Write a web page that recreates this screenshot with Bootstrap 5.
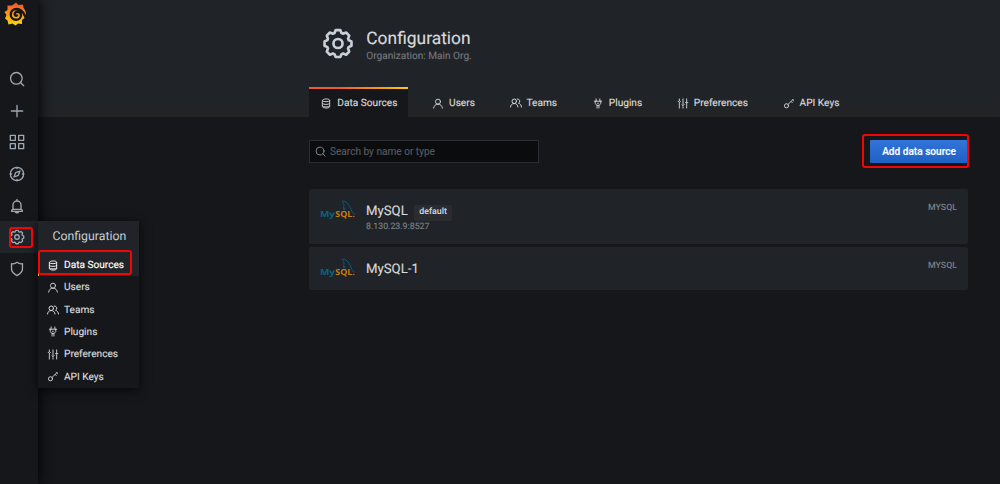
<!DOCTYPE html>
<html lang="en" data-bs-theme="dark">
<head>
<meta charset="utf-8">
<meta name="viewport" content="width=device-width, initial-scale=1">
<title>Configuration: Data Sources</title>
<link href="https://cdn.jsdelivr.net/npm/bootstrap@5.3.0/dist/css/bootstrap.min.css" rel="stylesheet">
<style>
body{background:#15171a;font-family:Roboto,sans-serif;color:#d8d9da;font-size:10.15px;line-height:1.5;height:484px;overflow:hidden;text-rendering:geometricPrecision}
svg.ico{fill:none;stroke:currentColor;stroke-width:2;stroke-linecap:round;stroke-linejoin:round;display:block;flex:none}
.side{width:38px;z-index:5;background:#15171a;box-shadow:0 0 14px 1px #000;flex:none}
.side-logo{height:63px;padding:2px 0 0 4px}
.side-item{height:31.7px;width:38px;padding-left:9px;color:#9fa7b3}
.side-item.open{background:#202327;color:#9fa7b3}
.flyout{left:38px;top:0;width:101px;height:167px;background:#15171a;box-shadow:0 2px 10px rgba(0,0,0,.75);color:#d8d9da}
.flyout-title{height:32.5px;background:#202327;font-size:12.3px;padding-left:14.5px;color:#c7d0d9}
.flyout-item{height:22.3px;padding-left:9px;gap:5px;-webkit-text-stroke:.15px}
.flyout-item span,.tab-item span{padding-top:1.4px}
.flyout-item.current{background:#202327;color:#fff;border-left:1px solid #f5b30b;padding-left:8px}
.top{background:linear-gradient(#202328 0,#202328 92px,#222325 117px);height:117px}
.inner{width:659px;margin-left:271px}
.ttl{font-size:17.4px;line-height:22px;color:#d8d9da;-webkit-text-stroke:.15px;padding-top:.6px}
.sub{font-size:10.1px;line-height:14px;color:#72767c;-webkit-text-stroke:.15px}
.tabs-row{gap:12.700px;height:30px}
.tab-item{padding:0 10.7px 0 11.3px;gap:5px;color:#d8d9da;border-top:2px solid transparent;-webkit-text-stroke:.15px}
.tab-item.current{background:#15171a;border-image:linear-gradient(90deg,#f05a28 30%,#fbca0a) 1}
.find{width:230px;height:23px;background:#0b0c0e;border:1px solid #2b2d31;padding-left:5px;gap:4px;color:#8b8f96}
.find input{font-size:10.1px;color:#c7d0d9;-webkit-text-stroke:.15px}
.find input::placeholder{color:#545860;opacity:1}
.add{width:98px;height:23px;background:linear-gradient(#3274d9,#1f60c4);color:#fff;font-size:10.1px;font-weight:500;border-radius:1px;border:0;-webkit-text-stroke:.15px}
.source{background:#202327;border-radius:2px;padding:0 11px}
.source-name{font-size:13.2px;line-height:18px;color:#d8d9da;-webkit-text-stroke:.15px}
.tag{background:#2b2c2f;border-radius:2px;height:16px;padding:0 5.500px;font-size:8.8px;font-weight:500;color:#d8dfe8}
.url{font-size:8.8px;line-height:12px;color:#7b8087;-webkit-text-stroke:.15px}
.kind{font-size:8.8px;color:#7b8087;font-weight:500}
.mark-box{border:2px solid #f20505;border-radius:3px;z-index:9;pointer-events:none}
</style>
</head>
<body>
<svg width="0" height="0" class="position-absolute">
<defs>
<symbol id="i-search" viewBox="0 0 24 24"><circle cx="11" cy="11" r="8.7"/><path d="M17.2 17.2 22 22"/></symbol>
<symbol id="i-plus" viewBox="0 0 24 24"><path d="M12 3.5v17M3.5 12h17"/></symbol>
<symbol id="i-apps" viewBox="0 0 24 24"><path d="M2 2H9.500V9.500H2ZM14.500 2H22V9.500H14.500ZM2 14.500H9.500V22H2ZM14.500 14.500H22V22H14.500Z"/></symbol>
<symbol id="i-compass" viewBox="0 0 24 24"><circle cx="12" cy="12" r="10"/><path d="M16.500 7.500 14 14l-6.500 2.500L10 10ZM12 2v2M12 20v2M2 12h2M20 12h2"/></symbol>
<symbol id="i-bell" viewBox="0 0 24 24"><path d="M12 2v2.500M6 17v-6.500a6 6 0 0 1 12 0V17M4 20v-1.500L6 17h12l2 1.500V20ZM9.500 20.500a2.700 2.700 0 0 0 5 0"/></symbol>
<symbol id="i-cog" viewBox="0 0 24 24"><path d="M9.300 4.200 10.300 2h3.400l1 2.200 1.100.450 2.300-.850 2.300 2.300-.850 2.300.450 1.100 2.100 1v3.200l-2.100 1-.450 1.100.850 2.300-2.300 2.300-2.300-.850-1.100.450-1 2.100h-3.400l-1-2.100-1.100-.450-2.300.850-2.300-2.300.850-2.300-.450-1.100-2.100-1v-3.200l2.100-1 .450-1.100-.850-2.300 2.300-2.300 2.300.850Z"/><circle cx="12" cy="12" r="3.400"/></symbol>
<symbol id="i-shield" viewBox="0 0 24 24"><path d="M12 2C9.500 4 6.500 4.600 3.800 4v8c0 4.500 3 7 8.200 10 5.200-3 8.200-5.500 8.200-10V4C17.500 4.600 14.500 4 12 2Z"/></symbol>
<symbol id="i-db" viewBox="0 0 24 24"><path d="M4 5c0-4 16-4 16 0v14c0 4-16 4-16 0ZM4 6c2 3 14 3 16 0M4 12c2 3 14 3 16 0M4 17.500c2 3 14 3 16 0"/></symbol>
<symbol id="i-user" viewBox="0 0 24 24"><circle cx="12" cy="8" r="5.500"/><path d="M2.500 22c.5-5 4-8.500 9.500-8.500s9 3.500 9.500 8.500"/></symbol>
<symbol id="i-users" viewBox="0 0 24 24"><circle cx="8.500" cy="8.500" r="4.500"/><path d="M1 20c.5-4 3-7 7.500-7s7 3 7.500 7M14.500 4a4.500 4.500 0 0 1 2.500 8.500c3.500 1 5.500 3.500 6 7.500"/></symbol>
<symbol id="i-plug" viewBox="0 0 24 24"><path d="M4 7h16M8 2v5M16 2v5M6 7v5l3.500 4h5L18 12V7M10 16v6M14 16v6M11 11.500h2"/></symbol>
<symbol id="i-sliders" viewBox="0 0 24 24"><path d="M4 2v3M4 9v13M1.500 8 4 5.500 6.500 8M12 2v12M12 19v3M9.500 14.500 12 17l2.500-2.500M20 2v6M20 12v10M17.500 10h5"/></symbol>
<symbol id="i-key" viewBox="0 0 24 24"><circle cx="6.500" cy="17" r="4.500"/><path d="m10 14 6-6 5-5M16.500 7.500l2.500 2.500M20 4l2 2"/></symbol>
<symbol id="i-mysql" viewBox="0 0 36 22"><g fill="none" stroke="#0b5f83" stroke-width=".9" stroke-linecap="round" stroke-linejoin="round"><path d="M22.500 1.200c1.800-.5 3.200.3 4.500 1.800 2.600 2.800 4 5.400 4.600 8 .4 1.500 1.500 2.100 2.900 3M22.500 1.200c.3 1.300 1 2 1.300 3 .6 2.200-.5 3.300-.2 4.800.4 1.800 1.300 1.300 1.300-.7"/></g><text x="0" y="17" font-family="Open Sans, sans-serif" font-weight="700" font-size="8.300" fill="#0b6088" textLength="15" lengthAdjust="spacingAndGlyphs">My</text><text x="15.300" y="17" font-family="Open Sans, sans-serif" font-weight="700" font-size="8.300" fill="#c87c16" textLength="19.500" lengthAdjust="spacingAndGlyphs">SQL.</text></symbol>
</defs>
</svg>

<div class="d-flex vh-100">
  <nav class="side position-relative d-flex flex-column">
    <div class="side-logo">
      <svg width="23" height="24" viewBox="0 0 46 48" aria-label="Grafana">
        <defs><linearGradient id="sun" x1="0" y1="1" x2="0" y2="0"><stop offset="0" stop-color="#fcdb0a"/><stop offset=".5" stop-color="#f89a1c"/><stop offset="1" stop-color="#f04e2a"/></linearGradient></defs>
        <path fill="url(#sun)" d="M24 1l5 5 9-1 1 7c3 3 5 8 5 13l-5 1 2 6-5 4 0 8-8-1-5 4-6-4-8 2-2-8-5-4 3-7-4-6 6-4 0-9 9 0Z"/>
        <path fill="none" stroke="#15171a" stroke-width="4.600" stroke-linecap="round" d="M42 28C39 21 34 14 25 14c-7 0-11.500 5-11.500 11S18 35.500 24 35.500s10-4 10-9-4-7-7.500-7-5.500 3-5 5.500 2.500 3 4.500 2"/>
      </svg>
    </div>
    <div class="side-item d-flex align-items-center"><svg class="ico" width="16" height="16"><use href="#i-search"/></svg></div>
    <div class="side-item d-flex align-items-center"><svg class="ico" width="16" height="16"><use href="#i-plus"/></svg></div>
    <div class="side-item d-flex align-items-center"><svg class="ico" width="16" height="16"><use href="#i-apps"/></svg></div>
    <div class="side-item d-flex align-items-center"><svg class="ico" width="16" height="16"><use href="#i-compass"/></svg></div>
    <div class="side-item d-flex align-items-center"><svg class="ico" width="16" height="16"><use href="#i-bell"/></svg></div>
    <div class="side-item open position-relative d-flex align-items-center"><svg class="ico" width="16" height="16"><use href="#i-cog"/></svg>
      <div class="flyout position-absolute">
        <div class="flyout-title d-flex align-items-center">Configuration</div>
        <div class="flyout-item current d-flex align-items-center"><svg class="ico" width="12" height="11"><use href="#i-db"/></svg><span>Data Sources</span></div>
        <div class="flyout-item d-flex align-items-center"><svg class="ico" width="12" height="11"><use href="#i-user"/></svg><span>Users</span></div>
        <div class="flyout-item d-flex align-items-center"><svg class="ico" width="12" height="12"><use href="#i-users"/></svg><span>Teams</span></div>
        <div class="flyout-item d-flex align-items-center"><svg class="ico" width="12" height="11"><use href="#i-plug"/></svg><span>Plugins</span></div>
        <div class="flyout-item d-flex align-items-center"><svg class="ico" width="12" height="11"><use href="#i-sliders"/></svg><span>Preferences</span></div>
        <div class="flyout-item d-flex align-items-center"><svg class="ico" width="12" height="11"><use href="#i-key"/></svg><span>API Keys</span></div>
        <div class="mark-box position-absolute" style="left:0;top:29px;width:94px;height:25px"></div>
      </div>
      <div class="mark-box position-absolute" style="left:9px;top:6px;width:24px;height:21px"></div>
    </div>
    <div class="side-item d-flex align-items-center"><svg class="ico" width="16" height="16"><use href="#i-shield"/></svg></div>
  </nav>

  <main class="flex-grow-1">
    <header class="top">
      <div class="inner d-flex flex-column h-100">
        <div class="d-flex flex-grow-1" style="padding:27px 0 0 13px">
          <svg class="ico" width="32" height="33" style="color:#c7d0d9"><use href="#i-cog"/></svg>
          <div style="margin-left:12.3px">
            <div class="ttl">Configuration</div>
            <div class="sub">Organization: Main Org.</div>
          </div>
        </div>
        <div class="tabs-row d-flex">
          <div class="tab-item current d-flex align-items-center"><svg class="ico" width="12" height="11"><use href="#i-db"/></svg><span>Data Sources</span></div>
          <div class="tab-item d-flex align-items-center"><svg class="ico" width="12" height="11"><use href="#i-user"/></svg><span>Users</span></div>
          <div class="tab-item d-flex align-items-center"><svg class="ico" width="12" height="12"><use href="#i-users"/></svg><span>Teams</span></div>
          <div class="tab-item d-flex align-items-center"><svg class="ico" width="12" height="11"><use href="#i-plug"/></svg><span>Plugins</span></div>
          <div class="tab-item d-flex align-items-center"><svg class="ico" width="12" height="11"><use href="#i-sliders"/></svg><span>Preferences</span></div>
          <div class="tab-item d-flex align-items-center"><svg class="ico" width="12" height="11"><use href="#i-key"/></svg><span>API Keys</span></div>
        </div>
      </div>
    </header>

    <section class="inner">
      <div class="d-flex justify-content-between" style="padding-top:23px">
        <div class="find d-flex align-items-center"><svg class="ico" width="11" height="11"><use href="#i-search"/></svg><input class="bg-transparent border-0 p-0 flex-grow-1" type="text" placeholder="Search by name or type"></div>
        <div class="position-relative">
          <button class="add btn p-0 d-block">Add data source</button>
          <div class="mark-box position-absolute" style="left:-8px;top:-6px;width:107px;height:34px"></div>
        </div>
      </div>
      <div class="source d-flex" style="height:55px;margin-top:26px">
        <svg width="36" height="22" style="margin-top:11px"><use href="#i-mysql"/></svg>
        <div style="margin:14px 0 0 10px">
          <div class="d-flex align-items-center" style="height:18px;gap:6px"><span class="source-name">MySQL</span><span class="tag d-flex align-items-center" style="margin-top:1px">default</span></div>
          <div class="url">8.130.23.9:8527</div>
        </div>
        <div class="kind ms-auto" style="margin-top:12.5px">MYSQL</div>
      </div>
      <div class="source d-flex" style="height:43px;margin-top:3px">
        <svg width="36" height="22" style="margin-top:11px"><use href="#i-mysql"/></svg>
        <div class="source-name" style="margin:14px 0 0 10px">MySQL-1</div>
        <div class="kind ms-auto" style="margin-top:12.5px">MYSQL</div>
      </div>
    </section>
  </main>
</div>
<script src="https://cdn.jsdelivr.net/npm/bootstrap@5.3.0/dist/js/bootstrap.bundle.min.js"></script>
</body>
</html>
